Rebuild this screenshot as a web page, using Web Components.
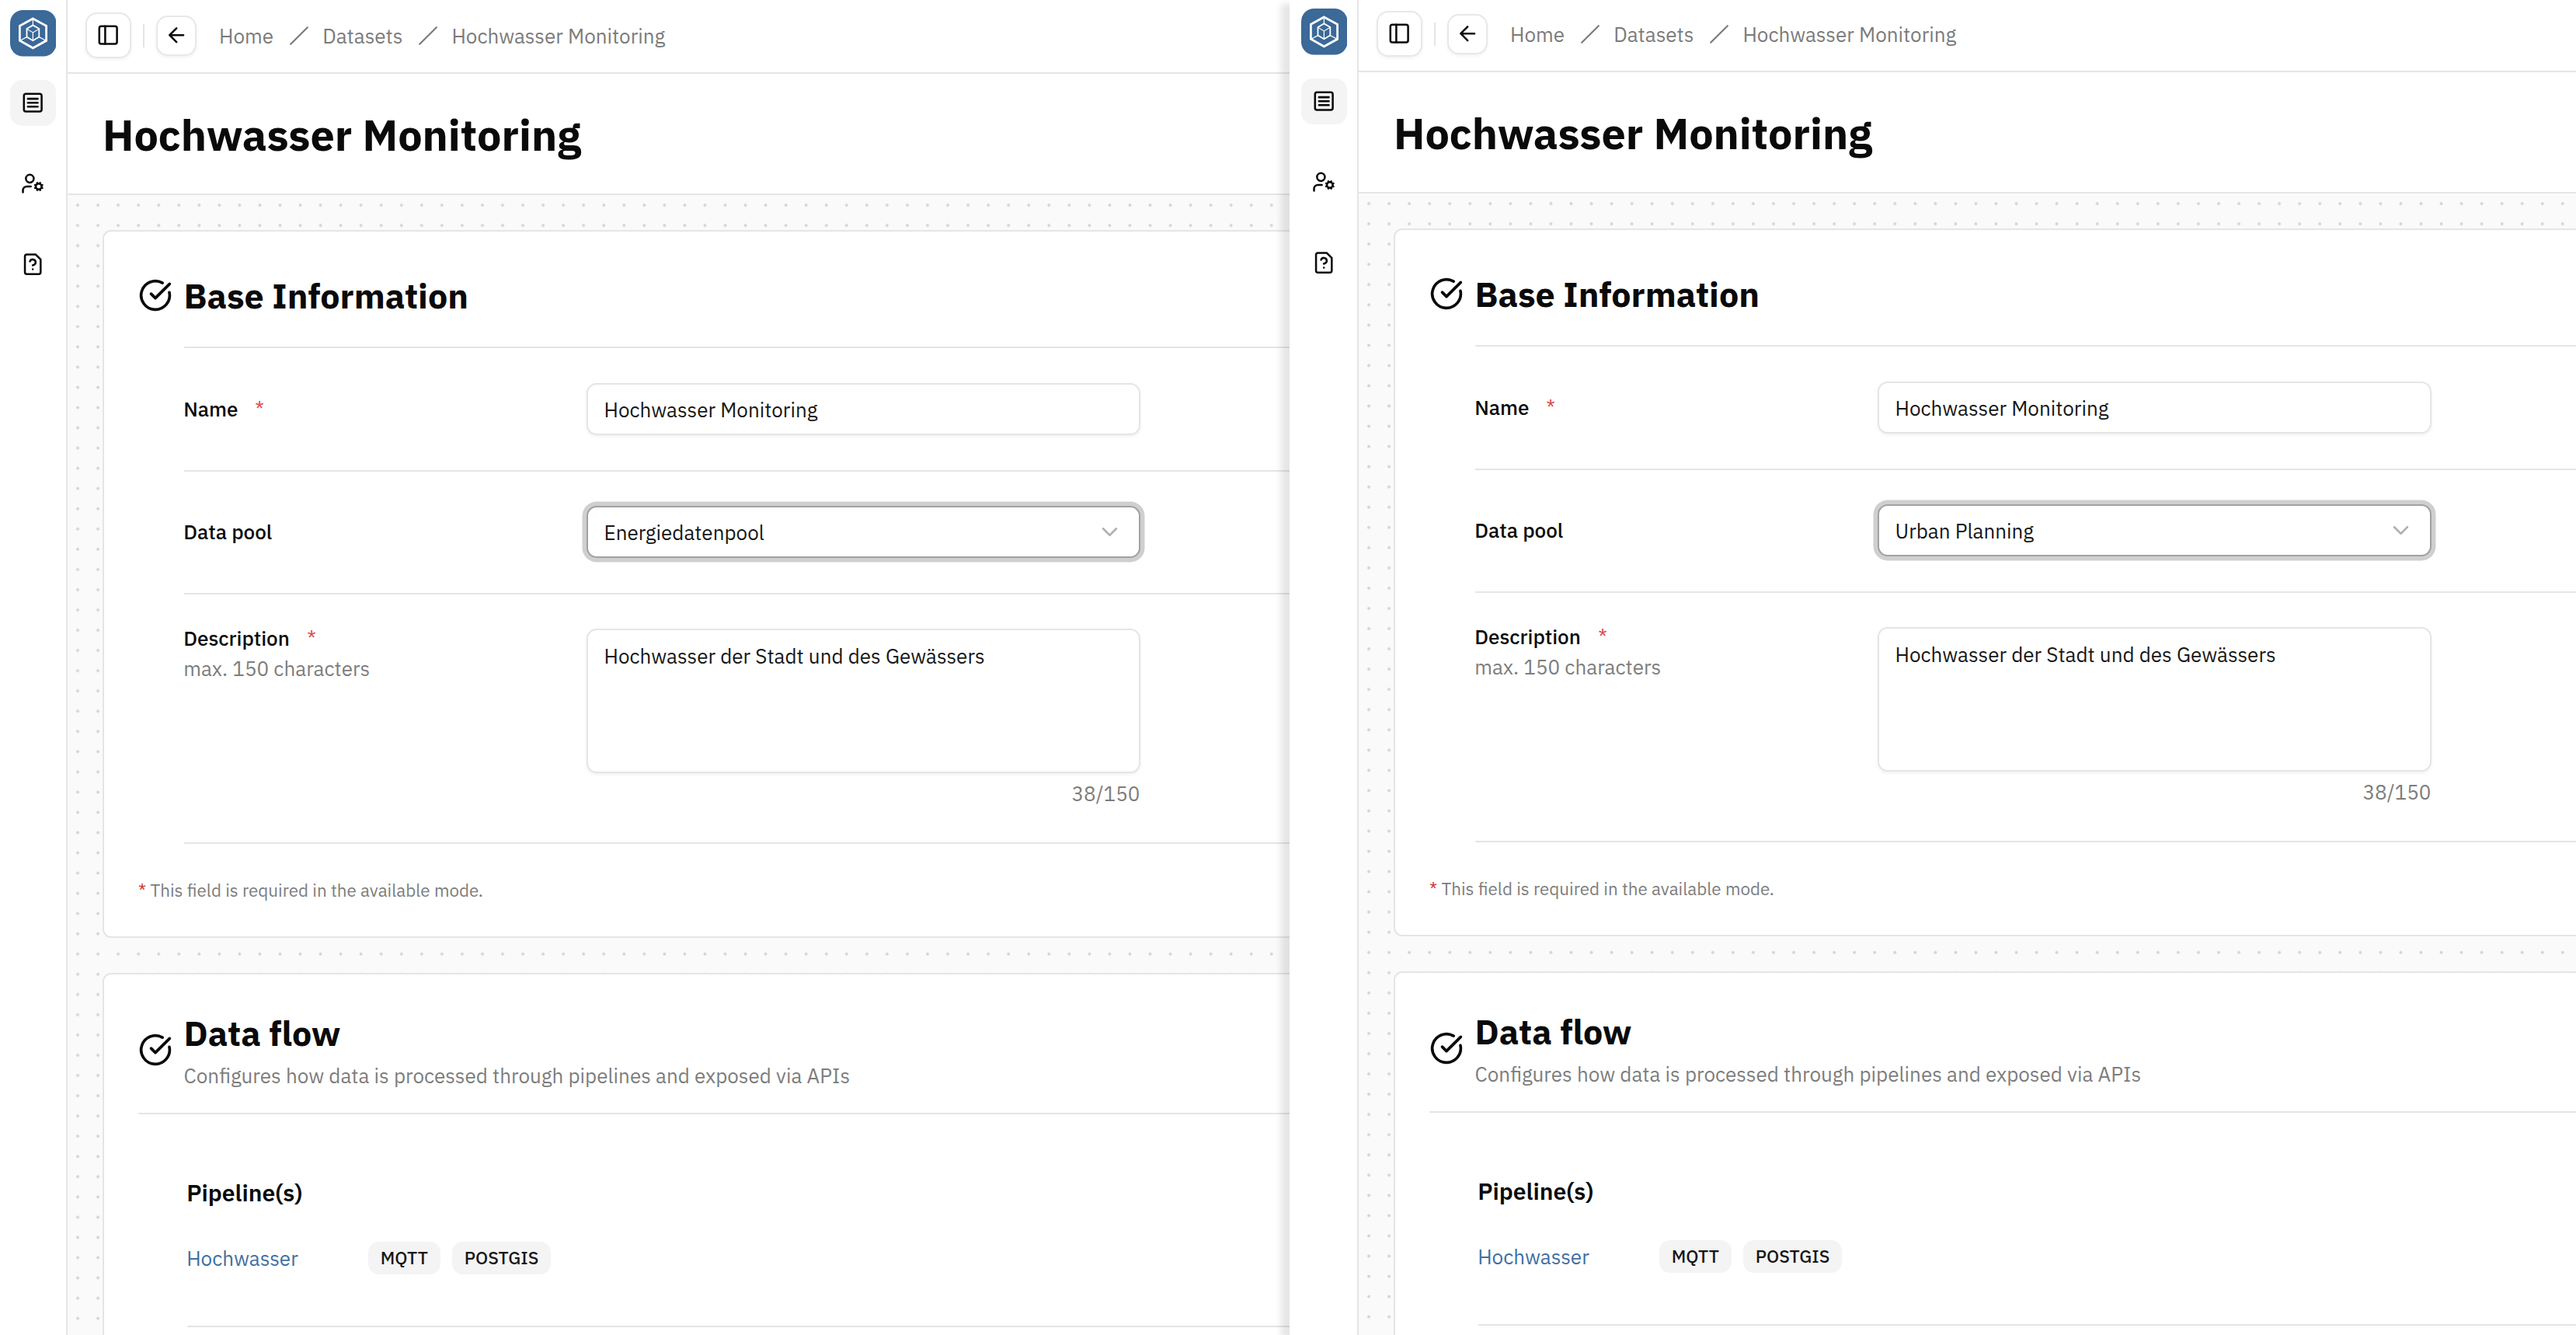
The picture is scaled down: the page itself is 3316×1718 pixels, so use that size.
<!DOCTYPE html>
<html lang="en">
<head>
<meta charset="utf-8">
<title>Hochwasser Monitoring</title>
<style>
html,body{margin:0;height:100%;overflow:hidden;background:#fff}
body{font-family:"IBM Plex Sans","Open Sans","Noto Sans",sans-serif;color:#0a0a0a}
</style>
</head>
<body>
<compare-view>
  <dataset-page pool="Energiedatenpool"></dataset-page>
  <dataset-page slot="overlay" pool="Urban Planning"></dataset-page>
</compare-view>
<script>
// Single line of text; "w" fixes the width of its box, "size" and "weight" set the type.
class UiText extends HTMLElement{
  connectedCallback(){
    if(this.shadowRoot)return;
    const size=this.getAttribute('size')||'26.05', wt=this.getAttribute('weight')||'400', w=this.getAttribute('w');
    this.attachShadow({mode:'open'}).innerHTML=`<style>
      :host{display:block;flex:none;${w?`width:${w}px;`:''}white-space:nowrap;line-height:var(--lh,36px);
        font-family:"IBM Plex Sans","Open Sans","Noto Sans",sans-serif;font-size:${size}px;font-weight:${wt}}
      </style><slot></slot>`;
  }
}
customElements.define('ui-text',UiText);

const ICONS={
  list:'<rect x="3" y="3" width="18" height="18" rx="2"/><path d="M7 8h10M7 12h10M7 16h10"/>',
  usercog:'<path d="M10 15H6a4 4 0 0 0-4 4v2"/><circle cx="9" cy="7" r="4"/><circle cx="18" cy="15" r="3"/><path d="m14.305 16.53.923-.382M15.228 13.852l-.923-.383M16.852 12.228l-.383-.923M16.852 17.772l-.383.924M19.148 12.228l.383-.923M19.53 18.696l-.382-.924M20.772 13.852l.924-.383M20.772 16.148l.924.383"/>',
  file:'<path d="M12 17h.01M15 2H6a2 2 0 0 0-2 2v16a2 2 0 0 0 2 2h12a2 2 0 0 0 2-2V7z"/><path d="M9.1 9a3 3 0 0 1 5.82 1c0 2-3 3-3 3"/>',
  panel:'<rect x="3" y="3" width="18" height="18" rx="2"/><path d="M9 3v18"/>',
  arrow:'<path d="m12 19-7-7 7-7M19 12H5"/>',
  slash:'<path d="M22 2 2 22"/>',
  check:'<path d="M21.801 10A10 10 0 1 1 17 3.335"/><path d="m9 11 3 3L22 4"/>',
  down:'<path d="m5 8.5 7 7 7-7"/>'
};
class UiIcon extends HTMLElement{
  connectedCallback(){
    if(this.shadowRoot)return;
    const s=this.getAttribute('size')||30.4, k=this.getAttribute('stroke')||2;
    this.attachShadow({mode:'open'}).innerHTML=`<style>:host{display:block;flex:none;width:${s}px;height:${s}px}svg{display:block}</style>
    <svg width="${s}" height="${s}" viewBox="0 0 24 24" fill="none" stroke="currentColor" stroke-width="${k}" stroke-linecap="round" stroke-linejoin="round">${ICONS[this.getAttribute('name')]}</svg>`;
  }
}
customElements.define('ui-icon',UiIcon);

const make=(name,html)=>{
  const t=document.createElement('template');t.innerHTML=html;
  customElements.define(name,class extends HTMLElement{
    constructor(){super();this.attachShadow({mode:'open'}).append(t.content.cloneNode(true));}
  });
};

make('app-logo',`<style>:host{display:block;width:59.5px;height:59.5px}svg{display:block}</style>
<svg width="59.5" height="59.5" viewBox="0 0 59.5 59.5" fill="none" stroke="#fff">
<rect width="59.5" height="59.5" rx="16.5" fill="#3b6998" stroke="none"/>
<path d="M29.4 10.9 46.6 20.3V39.3L29.4 48.8 12.4 39.3V20.3Z" stroke-width="2.8"/>
<path d="M29.4 19.4 37.3 24V34.6L29.4 39.3 21.5 34.6V24Z" stroke-width="1.8"/>
<path d="M21.5 24.3 29.4 28.9 37.3 24.3M29.4 28.9V39M29.4 11V19.4M12.8 39.2 21.5 34.6M46.2 39.2 37.3 34.6" stroke-width="1.2"/>
</svg>`);

make('nav-item',`<style>:host{display:flex;width:59.5px;height:59.5px;border-radius:15px;align-items:center;justify-content:center}
:host([active]){background:#f4f4f4}</style><slot></slot>`);

make('side-bar',`<style>:host{display:flex;flex-direction:column;flex:none;box-sizing:border-box;width:87px;padding:13px 0 0 12.7px;border-right:2px solid #e5e5e5;background:#fff}
nav{display:flex;flex-direction:column;gap:44.7px;margin-top:30px}</style>
<app-logo></app-logo>
<nav><nav-item active><ui-icon name="list"></ui-icon></nav-item>
<nav-item><ui-icon name="usercog"></ui-icon></nav-item>
<nav-item><ui-icon name="file"></ui-icon></nav-item></nav>`);

make('icon-button',`<style>:host{display:flex;flex:none;box-sizing:border-box;width:var(--s,59px);height:var(--s,59px);border:2px solid #e8e8e8;border-radius:15px;align-items:center;justify-content:center;box-shadow:0 2px 4px rgba(0,0,0,.06);background:#fff}</style><slot></slot>`);

make('top-bar',`<style>:host{display:flex;flex:none;box-sizing:border-box;height:95px;padding:0 0 2px 23px;border-bottom:2px solid #e5e5e5;align-items:center;background:#fff}
i{width:2px;height:30px;background:#e5e5e5;margin:0 15px}
icon-button.b{--s:52px}
div{display:flex;align-items:center;gap:17.6px;margin-left:29px;color:#7b7b7b}</style>
<icon-button><ui-icon name="panel"></ui-icon></icon-button><i></i>
<icon-button class="b"><ui-icon name="arrow"></ui-icon></icon-button>
<div><ui-text w="72">Home</ui-text><ui-icon name="slash" size="26"></ui-icon>
<ui-text w="105">Datasets</ui-text><ui-icon name="slash" size="26"></ui-icon>
<ui-text>Hochwasser Monitoring</ui-text></div>`);

make('page-title',`<style>:host{display:flex;flex:none;box-sizing:border-box;height:156px;padding:2px 0 0 45px;border-bottom:2px solid #e5e5e5;align-items:center;background:#fff;--lh:72px}</style>
<ui-text size="55.8" weight="700">Hochwasser Monitoring</ui-text>`);

make('ui-card',`<style>:host{display:block;flex:none;box-sizing:border-box;border:2px solid #e5e5e5;border-radius:11px;background:#fff;padding-left:44px;margin-right:-24px}</style><slot></slot>`);

make('card-head',`<style>:host{display:flex;align-items:center;gap:14.6px;box-sizing:border-box;height:var(--h);padding-top:15px}
div{--lh:66px;display:flex;flex-direction:column}</style>
<ui-icon name="check" size="44"></ui-icon><div><slot></slot></div>`);

make('field-row',`<style>:host{display:flex;box-sizing:border-box;border-top:2px solid #e5e5e5;height:158.5px;align-items:center}
:host([tall]){height:321px;align-items:flex-start}
.l{width:517.5px;flex:none;--lh:39px}
:host([tall]) .l{padding-top:37.3px}
:host([tall]) .c{padding-top:44px}
.c{width:713px}</style>
<div class="l"><slot name="label"></slot></div><div class="c"><slot></slot></div>`);

make('field-label',`<style>:host{display:flex;gap:21px;margin-left:-.8px}b{font-weight:400;color:#dc4a4a;font-size:26px;line-height:39px}
:host([plain]) b{display:none}</style><slot></slot><b>*</b>`);

make('text-box',`<style>:host{display:flex;box-sizing:border-box;width:713px;height:67px;border:2px solid #e5e5e5;border-radius:13px;align-items:center;justify-content:space-between;padding:1px 23px 0 21px;background:#fff;box-shadow:0 2px 4px rgba(0,0,0,.06);color:#171717}
:host([focus]){border-color:#a1a1a1;box-shadow:0 0 0 5.5px #cfcfcf;padding-top:0}
:host([area]){height:186px;align-items:flex-start;padding-top:15px}
::slotted(ui-icon){color:#b0b0b0}</style><slot></slot>`);

make('tag-badge',`<style>:host{display:flex;height:42px;align-items:center;border-radius:14px;background:#f4f4f4;padding:0 16px;color:#171717}</style><slot></slot>`);

class DatasetPage extends HTMLElement{
  constructor(){
    super();
    this.attachShadow({mode:'open'}).innerHTML=`<style>
    :host{display:flex;height:1722px;width:100%;overflow:hidden;background:#fff}
    .col{flex:1;display:flex;flex-direction:column;min-width:0}
    main{flex:1;display:flex;flex-direction:column;gap:45px;padding:45px 0 0 45px;
      background:radial-gradient(circle at 50% 50%,#d4d4d4 1.6px,transparent 2.3px) 0 0/26.05px 26.05px #fafafa}
    .base{height:911px;--h:148px}
    .flow{height:700px;--h:178px}
    .rows{margin-left:59px}
    .end{border-top:2px solid #e5e5e5}
    .muted{color:#7d7d7d}
    .hint{margin-left:-.8px}
    .count{display:flex;justify-content:flex-end;margin-top:8px}
    .note{display:flex;gap:5.5px;margin-top:44.6px;--lh:30px}
    .note i{font-style:normal;font-size:22.4px;line-height:30px;color:#cf3a36;width:10px}
    .pipes{border-top:2px solid #e5e5e5;padding:80.6px 0 0 62.2px;--lh:40px}
    .pipe{display:flex;height:42px;align-items:center;margin:43px 0 66px}
    .pipe .link{color:#3f6fa3;margin-right:87px}
    .pipe tag-badge+tag-badge{margin-left:15px}
    .pipes .end{margin-left:1.3px}
    </style>
    <side-bar></side-bar>
    <div class="col"><top-bar></top-bar><page-title></page-title>
    <main>
      <ui-card class="base">
        <card-head><ui-text size="44.8" weight="700">Base Information</ui-text></card-head>
        <div class="rows">
          <field-row><field-label slot="label"><ui-text w="71" weight="500">Name</ui-text></field-label>
            <text-box><ui-text>Hochwasser Monitoring</ui-text></text-box></field-row>
          <field-row><field-label slot="label" plain><ui-text weight="500">Data pool</ui-text></field-label>
            <text-box focus><ui-text>${this.getAttribute('pool')}</ui-text><ui-icon name="down" size="29" stroke="2.1"></ui-icon></text-box></field-row>
          <field-row tall><div slot="label"><field-label><ui-text w="138" weight="500">Description</ui-text></field-label>
              <ui-text class="muted hint">max. 150 characters</ui-text></div>
            <text-box area><ui-text>Hochwasser der Stadt und des Gewässers</ui-text></text-box>
            <div class="count muted"><ui-text>38/150</ui-text></div></field-row>
          <div class="end"></div>
        </div>
        <div class="note"><i>*</i><ui-text class="muted" size="22.4">This field is required in the available mode.</ui-text></div>
      </ui-card>
      <ui-card class="flow">
        <card-head><ui-text size="44.8" weight="700">Data flow</ui-text><ui-text class="muted" style="--lh:44px">Configures how data is processed through pipelines and exposed via APIs</ui-text></card-head>
        <div class="pipes"><ui-text size="30.1" weight="600">Pipeline(s)</ui-text>
          <div class="pipe"><ui-text class="link" w="146.6">Hochwasser</ui-text>
            <tag-badge><ui-text size="22.8" weight="500">MQTT</ui-text></tag-badge>
            <tag-badge><ui-text size="22.8" weight="500">POSTGIS</ui-text></tag-badge></div>
          <div class="end"></div>
        </div>
      </ui-card>
    </main></div>`;
  }
}
customElements.define('dataset-page',DatasetPage);

make('compare-view',`<style>:host{display:flex;width:3316px;height:1718px;overflow:hidden;background:#fff}
.a{flex:none;width:1660px;height:1718px;overflow:hidden}
.b{flex:1;min-width:0;height:1718px;background:#fff;box-shadow:-11px 5px 8px rgba(0,0,0,.1);z-index:1}
.in{height:1718px;overflow:hidden;padding-left:2px}
.b ::slotted(*){margin-top:-2px}</style>
<div class="a"><slot></slot></div><div class="b"><div class="in"><slot name="overlay"></slot></div></div>`);
</script>
</body>
</html>
